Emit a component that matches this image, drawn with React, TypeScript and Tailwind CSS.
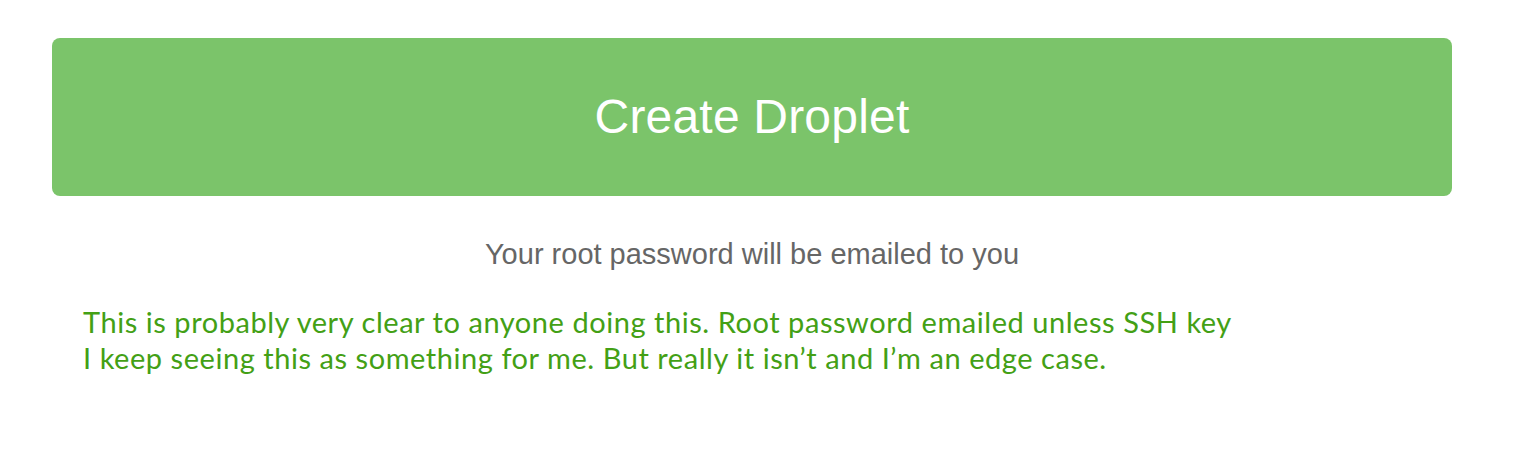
import React from 'react';

export default function App() {
  return (
    <div className="min-h-screen w-full bg-white pt-[38px] pl-[52px] pr-[70px]">
      <button
        type="button"
        className="flex h-[158px] w-[1400px] items-center justify-center rounded-[8px] bg-[#7bc46a] font-['Liberation_Sans',Arial,sans-serif] text-[48px] tracking-[0.2px] text-white"
      >
        Create Droplet
      </button>

      <p className="mt-[42px] w-[1400px] text-center font-['Liberation_Sans',Arial,sans-serif] text-[29px] leading-[32px] text-[#666666]">
        Your root password will be emailed to you
      </p>

      {/* annotation note */}
      <div className="mt-[34px] pl-[31px] font-['Lato','Open_Sans',sans-serif] text-[29px] leading-[36px] tracking-[0.55px] text-[#43a015]">
        <p>This is probably very clear to anyone doing this. Root password emailed unless SSH key</p>
        <p>I keep seeing this as something for me. But really it isn’t and I’m an edge case.</p>
      </div>
    </div>
  );
}
